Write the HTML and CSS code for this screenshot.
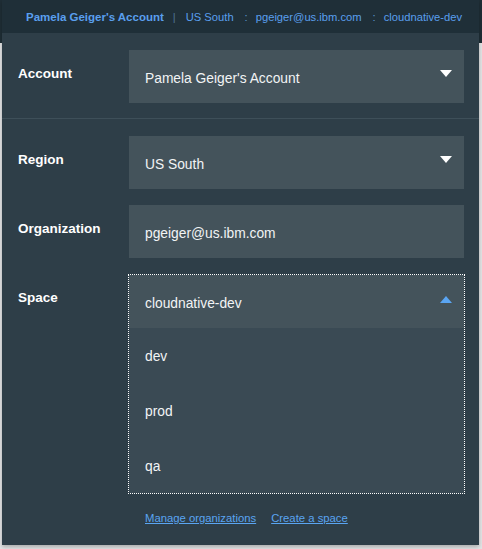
FILE: index.html
```html
<!DOCTYPE html>
<html>
<head>
<meta charset="utf-8">
<link rel="stylesheet" href="styles.css">
</head>
<body>
<div class="panel">
  <div class="topbar">
    <span class="tb-account">Pamela Geiger's Account</span>
    <span class="tb-pipe">|</span>
    <span class="tb-item">US South</span>
    <span class="tb-colon">:</span>
    <span class="tb-item">pgeiger@us.ibm.com</span>
    <span class="tb-colon">:</span>
    <span class="tb-item">cloudnative-dev</span>
  </div>

  <div class="section section-account">
    <div class="row">
      <div class="label">Account</div>
      <div class="select">
        <span>Pamela Geiger's Account</span>
        <svg class="caret" width="12" height="7" viewBox="0 0 12 7"><path d="M0 0H12L6 7Z" fill="#ffffff"/></svg>
      </div>
    </div>
  </div>

  <div class="section section-rest">
    <div class="row">
      <div class="label">Region</div>
      <div class="select">
        <span>US South</span>
        <svg class="caret" width="12" height="7" viewBox="0 0 12 7"><path d="M0 0H12L6 7Z" fill="#ffffff"/></svg>
      </div>
    </div>
    <div class="row">
      <div class="label">Organization</div>
      <div class="select">
        <span>pgeiger@us.ibm.com</span>
      </div>
    </div>
    <div class="row">
      <div class="label">Space</div>
      <div class="open-select">
        <div class="select select-open">
          <span>cloudnative-dev</span>
          <svg class="caret caret-up" width="12" height="7" viewBox="0 0 12 7"><path d="M0 7H12L6 0Z" fill="#5aa5f2"/></svg>
        </div>
        <ul class="options">
          <li>dev</li>
          <li>prod</li>
          <li>qa</li>
        </ul>
      </div>
    </div>
    <div class="links">
      <a href="#">Manage organizations</a>
      <a href="#">Create a space</a>
    </div>
  </div>
</div>
</body>
</html>
```

FILE: styles.css
```css
html, body {
  margin: 0;
  padding: 0;
}
body {
  width: 482px;
  height: 549px;
  background: linear-gradient(#1f2e36 0, #1f2e36 43px, #e3e4e5 43px, #e3e4e5 100%);
  font-family: "Liberation Sans", Arial, sans-serif;
  overflow: hidden;
}
.panel {
  margin-left: 2px;
  width: 477px;
  height: 545px;
  background: #2e3e48;
  box-shadow: 0 2px 4px rgba(0,0,0,0.25);
  display: flex;
  flex-direction: column;
}
.topbar {
  height: 33px;
  background: #1f2f38;
  display: flex;
  align-items: center;
  padding-left: 24px;
  font-size: 11.2px;
  color: #5a9fee;
  white-space: nowrap;
}
.tb-account {
  font-weight: bold;
  font-size: 11.5px;
}
.tb-pipe {
  color: #4f7490;
  margin: 0 10px 0 9px;
}
.tb-colon {
  color: #5a8fc8;
  margin: 0 8px 0 11px;
}
.section-account {
  padding: 17px 15px 15px 16px;
  border-bottom: 1px solid #3e4f59;
}
.section-rest {
  padding: 17px 15px 0 16px;
  display: flex;
  flex-direction: column;
  gap: 16px;
}
.row {
  display: flex;
  align-items: flex-start;
}
.label {
  width: 111px;
  flex: none;
  padding-top: 16px;
  font-size: 13.5px;
  font-weight: bold;
  color: #ffffff;
  line-height: 16px;
}
.select {
  width: 335px;
  height: 53px;
  box-sizing: border-box;
  background: #44535b;
  padding: 3px 12px 0 16px;
  display: flex;
  align-items: center;
  justify-content: space-between;
  font-size: 13.8px;
  color: #f2f4f5;
}
.caret {
  margin-top: -10px;
  display: block;
}
.caret-up {
  margin-top: -8px;
}
.open-select {
  margin-left: -1px;
  border: 1px dotted #ffffff;
  width: 335px;
}
.options {
  list-style: none;
  margin: 0;
  padding: 0;
  background: #3a4a54;
}
.options li {
  height: 55px;
  box-sizing: border-box;
  padding-top: 2px;
  line-height: 53px;
  padding-left: 16px;
  font-size: 13.8px;
  color: #f2f4f5;
}
.links {
  margin-top: 2px;
  padding-left: 127px;
  display: flex;
  gap: 15px;
  font-size: 11.3px;
}
.links a {
  color: #5aa5f2;
  text-decoration: underline;
}
```
